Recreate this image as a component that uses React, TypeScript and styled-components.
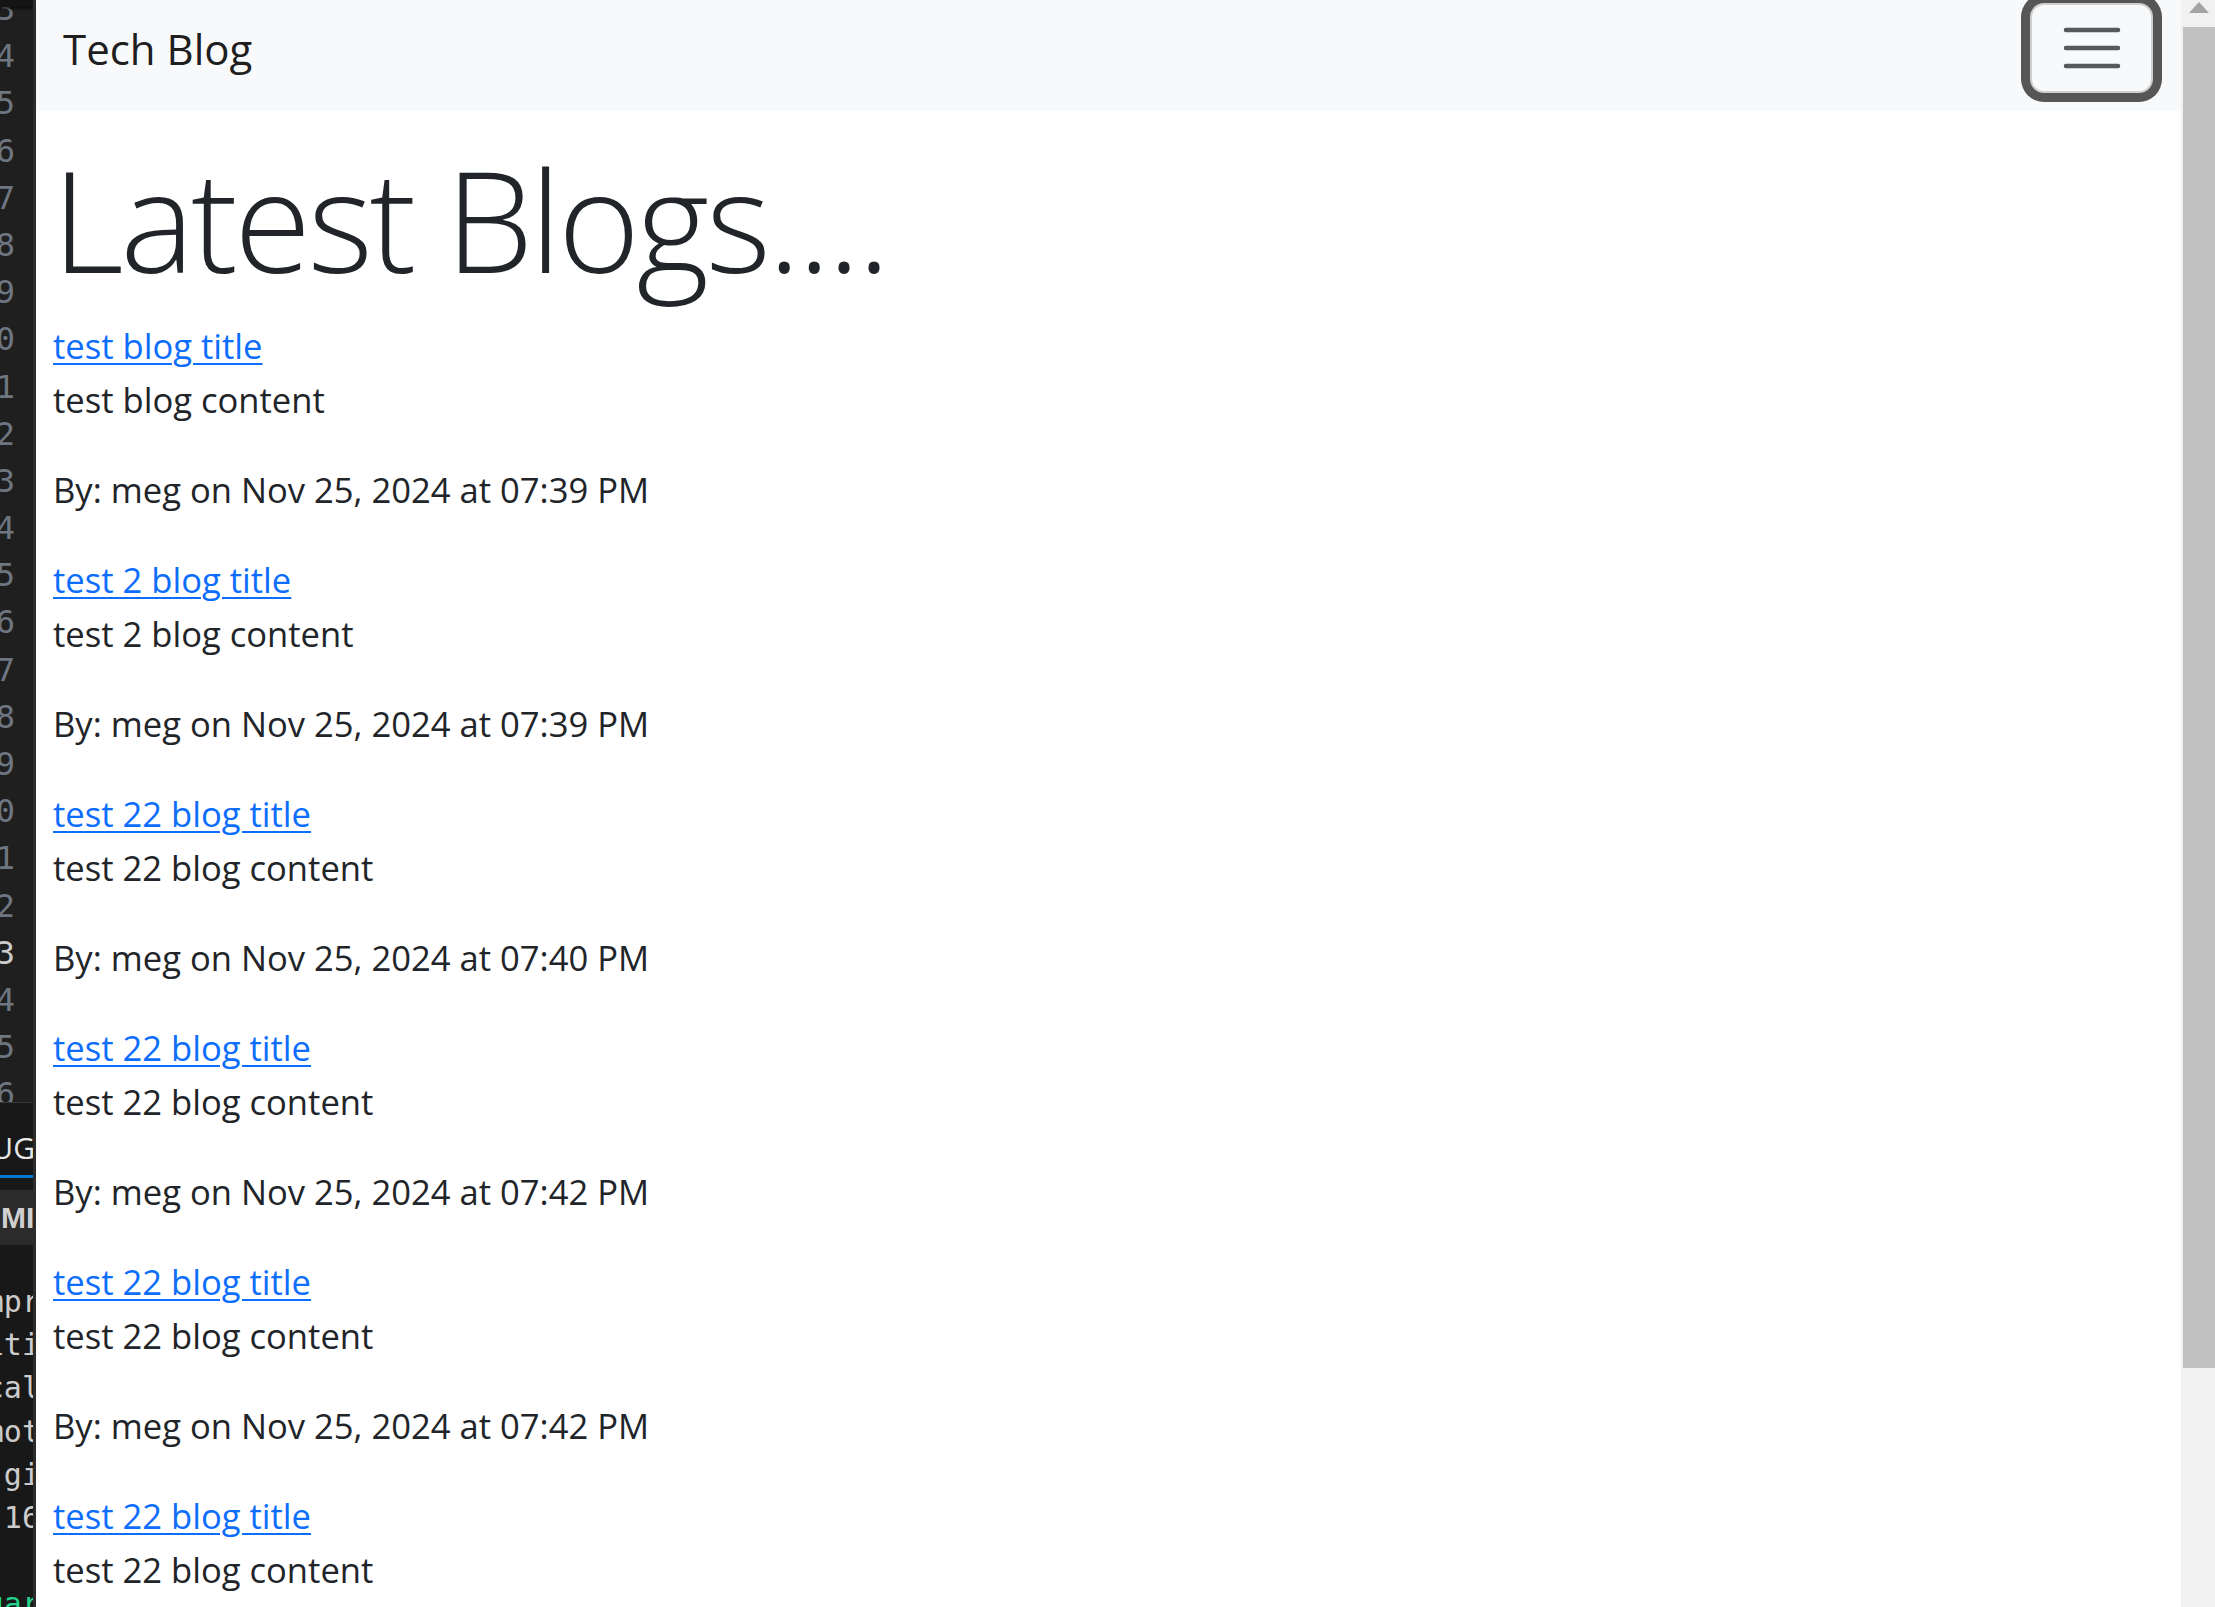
import React from "react";
import styled, { createGlobalStyle } from "styled-components";

const GlobalStyle = createGlobalStyle`
  html, body {
    margin: 0;
    padding: 0;
    background: #ffffff;
    overflow: hidden;
  }
  * { box-sizing: border-box; }
`;

const Screen = styled.div`
  display: flex;
  width: 2215px;
  height: 1607px;
  overflow: hidden;
  font-family: "Open Sans", "Noto Sans", "Liberation Sans", sans-serif;
`;

/* ---------- editor strip on the left ---------- */
const EditorStrip = styled.aside`
  flex: 0 0 36px;
  display: flex;
  flex-direction: column;
  background: #181818;
  border-right: 3px solid #2c2c2c;
  overflow: hidden;
`;

const TopBand = styled.div`
  flex: 0 0 7px;
  background: #141414;
  box-shadow: 0 2px 3px rgba(0, 0, 0, 0.6);
  position: relative;
  z-index: 1;
`;

const Gutter = styled.div`
  flex: 0 0 1096px;
  background: #1f1f1f;
  overflow: hidden;
  border-bottom: 1px solid #3a3a3a;
`;

const GutterInner = styled.div`
  margin-top: -21px;
  display: flex;
  flex-direction: column;
`;

const LineNo = styled.div<{ $bright?: boolean }>`
  height: 47.2px;
  line-height: 47.2px;
  display: flex;
  justify-content: flex-end;
  padding-right: 18px;
  font-family: "DejaVu Sans Mono", "Liberation Mono", monospace;
  font-size: 32px;
  color: ${(p) => (p.$bright ? "#cccccc" : "#6e7681")};
  white-space: nowrap;
`;

const PanelTab = styled.div`
  flex: 0 0 75px;
  display: flex;
  flex-direction: column;
  justify-content: flex-end;
  background: #181818;
`;

const PanelTabLabel = styled.div`
  display: flex;
  justify-content: flex-end;
  font-family: "Open Sans", "Liberation Sans", sans-serif;
  font-size: 30px;
  line-height: 30px;
  color: #e7e7e7;
  white-space: nowrap;
  margin-right: -2px;
  padding-bottom: 12px;
`;

const ActiveUnderline = styled.div`
  height: 3px;
  background: #0078d4;
`;

const Gap = styled.div<{ $h: number }>`
  flex: 0 0 ${(p) => p.$h}px;
`;

const SectionBand = styled.div`
  flex: 0 0 55px;
  background: #2b2b2b;
  display: flex;
  align-items: center;
  justify-content: flex-start;
  font-family: "Liberation Sans", sans-serif;
  font-weight: 700;
  font-size: 30px;
  color: #d0d0d0;
  white-space: nowrap;
  padding-left: 1px;
`;

const Terminal = styled.div`
  flex: 1;
  padding-top: 35px;
  display: flex;
  flex-direction: column;
`;

const TermLine = styled.div<{ $color?: string; $mt?: number }>`
  flex: 0 0 43.2px;
  line-height: 43.2px;
  margin-top: ${(p) => p.$mt ?? 0}px;
  font-family: "DejaVu Sans Mono", "Liberation Mono", monospace;
  font-size: 30px;
  color: ${(p) => p.$color ?? "#cccccc"};
  white-space: pre;
  display: flex;
  justify-content: flex-end;
  margin-right: -7px;
`;

/* ---------- browser page ---------- */
const Page = styled.div`
  flex: 1;
  display: flex;
  flex-direction: column;
  background: #ffffff;
  min-width: 0;
`;

const Navbar = styled.nav`
  flex: 0 0 111px;
  background: #f8f9fa;
  display: flex;
  justify-content: space-between;
  align-items: flex-start;
  padding: 0 28px 0 27px;
`;

const Brand = styled.a`
  padding-top: 17px;
  font-size: 42px;
  line-height: 1.5;
  color: rgba(0, 0, 0, 0.9);
  text-decoration: none;
`;

const Toggler = styled.button`
  margin-top: 3px;
  width: 123px;
  height: 90px;
  display: flex;
  align-items: center;
  justify-content: center;
  background: #f8f9fa;
  border: 2px solid #cfcfcf;
  border-radius: 14px;
  box-shadow: 0 0 0 9px #565656;
  padding: 0;
  cursor: pointer;
`;

const Main = styled.main`
  padding: 24px 0 0 17px;
  display: flex;
  flex-direction: column;
  color: #212529;
`;

const Heading = styled.h1`
  margin: 0 0 16px -1px;
  font-size: 140px;
  font-weight: 300;
  letter-spacing: -3.5px;
  line-height: 1.2;
  color: #212529;
`;

const PostList = styled.div`
  display: flex;
  flex-direction: column;
`;

const Post = styled.article`
  display: flex;
  flex-direction: column;
`;

const PostTitle = styled.a`
  align-self: flex-start;
  font-size: 34.6px;
  line-height: 54px;
  color: #0d6efd;
  text-decoration: underline;
  text-underline-offset: 4px;
  text-decoration-thickness: 2px;
`;

const Para = styled.p`
  margin: 0 0 36px;
  font-size: 34.6px;
  line-height: 54px;
  color: #212529;
`;

/* ---------- scrollbar ---------- */
const Scrollbar = styled.div`
  flex: 0 0 34px;
  background: #f1f1f1;
  display: flex;
  flex-direction: column;
  padding-left: 2px;
`;

const ScrollArrow = styled.div`
  flex: 0 0 27px;
  display: flex;
  justify-content: center;
  padding-top: 2px;
`;

const ScrollThumb = styled.div`
  flex: 0 0 1341px;
  background: #c1c1c1;
`;

const posts = [
  { title: "test blog title", content: "test blog content", time: "07:39 PM" },
  { title: "test 2 blog title", content: "test 2 blog content", time: "07:39 PM" },
  { title: "test 22 blog title", content: "test 22 blog content", time: "07:40 PM" },
  { title: "test 22 blog title", content: "test 22 blog content", time: "07:42 PM" },
  { title: "test 22 blog title", content: "test 22 blog content", time: "07:42 PM" },
  { title: "test 22 blog title", content: "test 22 blog content", time: "07:42 PM" },
];

const lineDigits = ["3", "4", "5", "6", "7", "8", "9", "0", "1", "2", "3", "4", "5", "6", "7", "8", "9", "0", "1", "2", "3", "4", "5", "6", "7"];

export default function App() {
  return (
    <>
      <GlobalStyle />
      <Screen>
        <EditorStrip>
          <TopBand />
          <Gutter>
            <GutterInner>
              {lineDigits.map((d, i) => (
                <LineNo key={i} $bright={i === 20}>
                  {d}
                </LineNo>
              ))}
            </GutterInner>
          </Gutter>
          <PanelTab>
            <PanelTabLabel>DEBUG</PanelTabLabel>
            <ActiveUnderline />
          </PanelTab>
          <Gap $h={12} />
          <SectionBand>MI</SectionBand>
          <Terminal>
            <TermLine>mpr</TermLine>
            <TermLine>iti</TermLine>
            <TermLine>cal</TermLine>
            <TermLine>mot</TermLine>
            <TermLine> gi</TermLine>
            <TermLine> 16</TermLine>
            <TermLine $color="#23d18b" $mt={43.2}>gar</TermLine>
          </Terminal>
        </EditorStrip>

        <Page>
          <Navbar>
            <Brand href="#">Tech Blog</Brand>
            <Toggler aria-label="Toggle navigation">
              <svg width="60" height="44" viewBox="0 0 60 44">
                <g stroke="#55585c" strokeWidth="4.5" strokeLinecap="round">
                  <line x1="4" y1="4" x2="56" y2="4" />
                  <line x1="4" y1="22" x2="56" y2="22" />
                  <line x1="4" y1="40" x2="56" y2="40" />
                </g>
              </svg>
            </Toggler>
          </Navbar>
          <Main>
            <Heading>Latest Blogs....</Heading>
            <PostList>
              {posts.map((p, i) => (
                <Post key={i}>
                  <PostTitle href="#">{p.title}</PostTitle>
                  <Para>{p.content}</Para>
                  <Para>By: meg on Nov 25, 2024 at {p.time}</Para>
                </Post>
              ))}
            </PostList>
          </Main>
        </Page>

        <Scrollbar>
          <ScrollArrow>
            <svg width="20" height="11" viewBox="0 0 20 11">
              <polygon points="10,0 20,11 0,11" fill="#a3a3a3" />
            </svg>
          </ScrollArrow>
          <ScrollThumb />
        </Scrollbar>
      </Screen>
    </>
  );
}
